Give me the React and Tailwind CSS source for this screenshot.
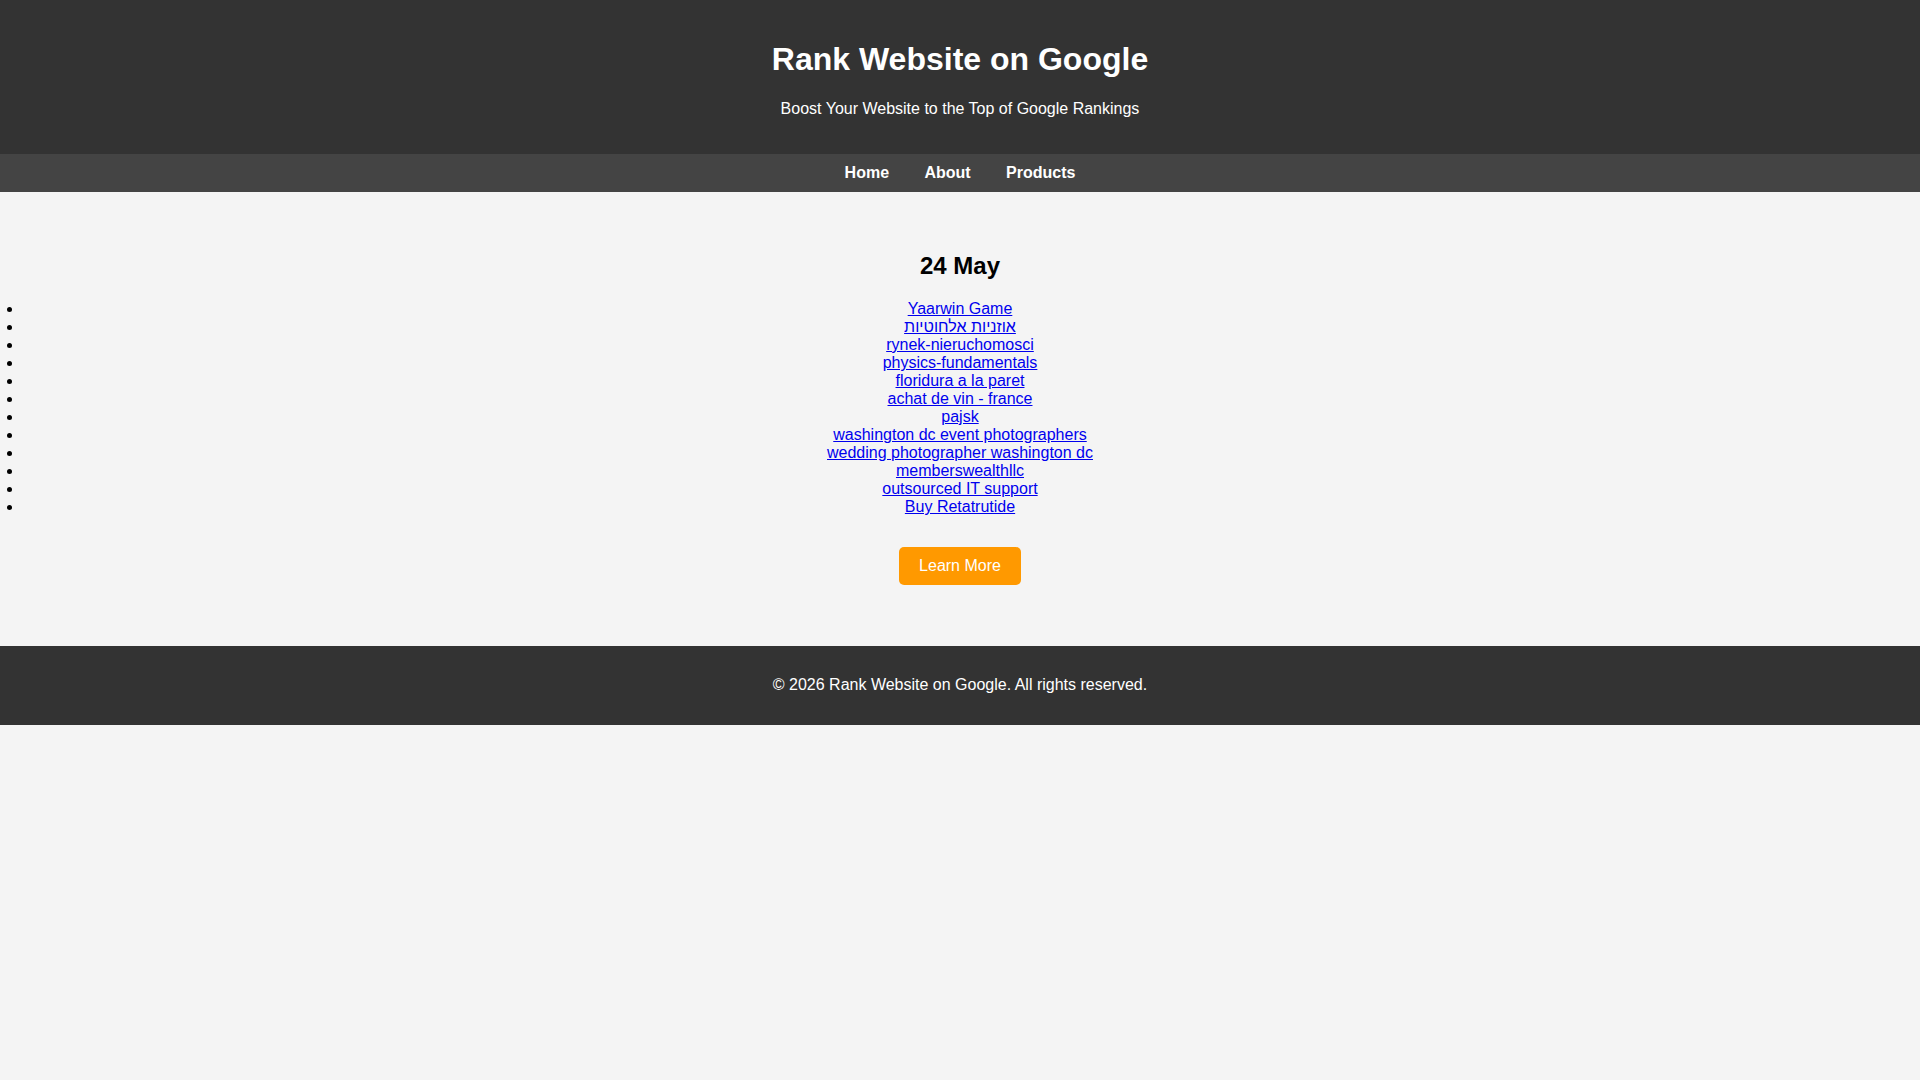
import React from "react";

const links = [
  "Yaarwin Game",
  "אוזניות אלחוטיות",
  "rynek-nieruchomosci",
  "physics-fundamentals",
  "floridura a la paret",
  "achat de vin - france",
  "pajsk",
  "washington dc event photographers",
  "wedding photographer washington dc",
  "memberswealthllc",
  "outsourced IT support",
  "Buy Retatrutide",
];

export default function App() {
  return (
    <div className="min-h-screen bg-[#f4f4f4] text-[16px] text-black font-['Liberation_Sans',Arial,'Noto_Sans',sans-serif]">
      <header className="bg-[#333333] text-white text-center p-5">
        <h1 className="text-[32px] font-bold leading-[36.8px] my-[21.44px]">Rank Website on Google</h1>
        <p className="leading-[18.4px] my-4">Boost Your Website to the Top of Google Rankings</p>
      </header>
      <nav className="bg-[#444444] py-[10px] flex justify-center gap-[35.4px]">
        <a href="#" className="text-white font-bold leading-[18px]">Home</a>
        <a href="#" className="text-white font-bold leading-[18px]">About</a>
        <a href="#" className="text-white font-bold leading-[18px]">Products</a>
      </nav>
      <main className="px-5 pt-[60px] pb-[60.8px] text-center">
        <h2 className="text-[24px] font-bold leading-[27.6px] mb-[20.4px]">24 May</h2>
        <ul className="list-disc px-[2.5px]">
          {links.map((t) => (
            <li key={t} className="leading-[18px]">
              <a href="#" className="text-[#0000ee] underline">{t}</a>
            </li>
          ))}
        </ul>
        <div className="mt-[30.7px] flex justify-center">
          <a href="#" className="block bg-[#ff9900] text-white px-5 py-[10px] rounded-[5px] leading-[18px]">Learn More</a>
        </div>
      </main>
      <footer className="bg-[#333333] text-white text-center py-[30.5px]">
        <p className="leading-[18.4px]">© 2026 Rank Website on Google. All rights reserved.</p>
      </footer>
    </div>
  );
}
